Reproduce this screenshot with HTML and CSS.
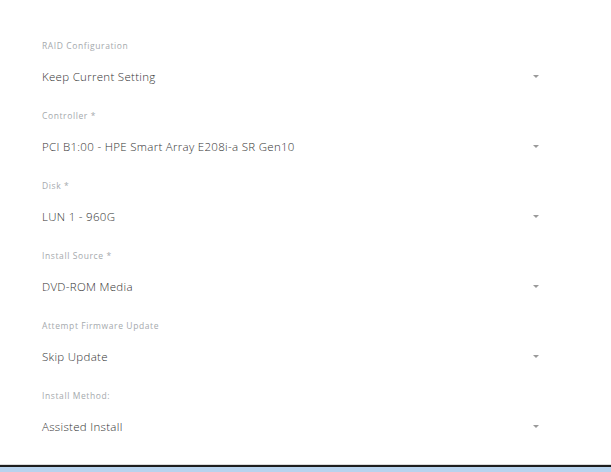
FILE: index.html
```html
<!DOCTYPE html>
<html>
<head>
<meta charset="utf-8">
<link rel="stylesheet" href="styles.css">
</head>
<body>
<div class="page">
  <main class="form">
    <div class="field">
      <div class="label">RAID Configuration</div>
      <div class="select"><span class="value">Keep Current Setting</span><span class="caret"></span></div>
    </div>
    <div class="field">
      <div class="label">Controller *</div>
      <div class="select"><span class="value">PCI B1:00 - HPE Smart Array E208i-a SR Gen10</span><span class="caret"></span></div>
    </div>
    <div class="field">
      <div class="label">Disk *</div>
      <div class="select"><span class="value">LUN 1 - 960G</span><span class="caret"></span></div>
    </div>
    <div class="field">
      <div class="label">Install Source *</div>
      <div class="select"><span class="value">DVD-ROM Media</span><span class="caret"></span></div>
    </div>
    <div class="field">
      <div class="label">Attempt Firmware Update</div>
      <div class="select"><span class="value">Skip Update</span><span class="caret"></span></div>
    </div>
    <div class="field">
      <div class="label">Install Method:</div>
      <div class="select"><span class="value">Assisted Install</span><span class="caret"></span></div>
    </div>
  </main>
  <footer class="footer"><div class="footer-bar"></div></footer>
</div>
</body>
</html>
```

FILE: styles.css
```css
html, body {
  margin: 0;
  padding: 0;
  background: #ffffff;
}
body {
  font-family: "Open Sans", Lato, "Liberation Sans", sans-serif;
}
.page {
  display: flex;
  flex-direction: column;
  height: 100vh;
  overflow: hidden;
}
.form {
  flex: 1;
  padding: 39px 0 0 42px;
  display: flex;
  flex-direction: column;
  gap: 23px;
}
.field {
  display: flex;
  flex-direction: column;
  gap: 13px;
  width: 503px;
}
.label {
  height: 14px;
  line-height: 14px;
  font-size: 8.5px;
  letter-spacing: 0.6px;
  color: #a5a9ad;
}
.select {
  height: 20px;
  display: flex;
  align-items: center;
  justify-content: space-between;
}
.value {
  font-size: 11.5px;
  font-weight: 300;
  letter-spacing: 0.3px;
  color: #333333;
}
.caret {
  width: 0;
  height: 0;
  border-left: 3px solid transparent;
  border-right: 3px solid transparent;
  border-top: 3px solid #9a9a9a;
  margin-right: 6px;
}
.footer {
  border-top: 1px solid #dcdcdc;
}
.footer-bar {
  border-top: 2px solid #1e1e1e;
  height: 5px;
  background: #b8d3ee;
}
```
